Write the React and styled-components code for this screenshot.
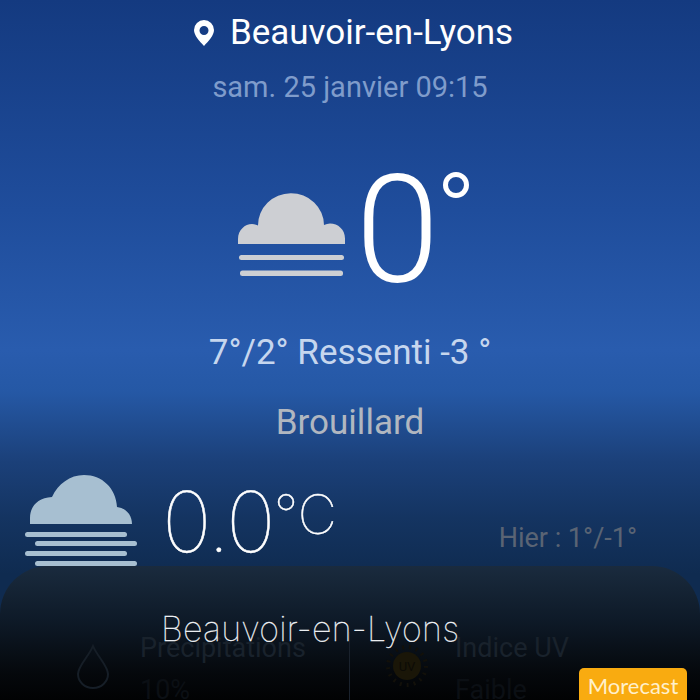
import React from "react"
import styled, { createGlobalStyle } from "styled-components"

const Global = createGlobalStyle`
  html, body {
    margin: 0;
    padding: 0;
    background: #000;
  }
`

const Screen = styled.div`
  position: relative;
  width: 700px;
  height: 700px;
  overflow: hidden;
  display: flex;
  flex-direction: column;
  align-items: center;
  font-family: Roboto, "Liberation Sans", sans-serif;
  background: linear-gradient(
    180deg,
    #143a80 0%,
    #1f4d9c 30%,
    #295cae 50%,
    #2558a5 56%,
    #1b4079 66%,
    #143461 74%,
    #0f2b50 82%,
    #0f2b50 100%
  );
`

const City = styled.div`
  display: flex;
  align-items: center;
  gap: 16px;
  height: 32px;
  margin-top: 17px;
  margin-left: 7px;
  color: #fff;
  font-size: 35px;
  line-height: 32px;
`

const DateLine = styled.div`
  margin-top: 22px;
  color: #7f9ccb;
  font-size: 29px;
  line-height: 32px;
`

const Now = styled.div`
  display: flex;
  align-items: flex-start;
  height: 130px;
  margin-top: 64px;
  margin-left: 7px;
  color: #fff;

  svg {
    margin-top: 21px;
  }
`

const BigTemp = styled.div`
  font-size: 151px;
  font-weight: 300;
  line-height: 130px;
  margin-left: 10px;
  margin-top: -1px;
`

const Degree = styled.span`
  display: block;
  width: 26px;
  height: 26px;
  box-sizing: border-box;
  margin-left: 4px;
  margin-top: 5px;
  border: 5px solid #fff;
  border-radius: 50%;
`

const Feels = styled.div`
  margin-top: 37px;
  color: #c6d6ee;
  font-size: 35px;
  line-height: 38px;
`

const Condition = styled.div`
  margin-top: 32px;
  color: #b1b7c0;
  font-size: 35px;
  line-height: 38px;
`

const Bridge = styled.div`
  align-self: stretch;
  display: flex;
  align-items: flex-start;
  height: 91px;
  margin-top: 33px;
  padding-left: 25px;
`

const Reading = styled.div`
  margin-left: 25px;
  margin-top: -2px;
  color: #fff;
  font-family: Inter, Lato, sans-serif;
  font-weight: 100;
  font-size: 84px;
  line-height: 84px;
  letter-spacing: -2px;
  -webkit-text-stroke: 0.5px #fff;
`

const Unit = styled.span`
  font-size: 54px;
  vertical-align: 18px;
  letter-spacing: 0;
`

const Yesterday = styled.div`
  margin-left: auto;
  margin-right: 63px;
  margin-top: 48px;
  color: #5a6474;
  font-size: 27px;
  line-height: 30px;
`

const Sheet = styled.div`
  align-self: stretch;
  flex: 1;
  min-height: 0;
  overflow: hidden;
  display: grid;
  grid-template-columns: 1fr 1fr;
  border-radius: 48px 48px 0 0;
  background: linear-gradient(180deg, #1a2b3e 0%, #0e1a28 40%, #05080c 80%, #010203 100%);
`

const Stat = styled.div`
  display: flex;
  align-items: flex-start;
  gap: ${({ $gap }) => $gap}px;
  height: 100px;
  margin-top: 66px;
  padding-left: ${({ $inset }) => $inset}px;
  border-right: ${({ $divided }) => ($divided ? "1px solid #1a222d" : "none")};
  font-size: 27px;
  line-height: 32px;

  svg {
    margin-top: 12px;
    flex: none;
  }
`

const StatLines = styled.div`
  display: flex;
  flex-direction: column;
  gap: 10px;
`

const StatLabel = styled.span`
  color: #19222c;
`

const StatValue = styled.span`
  color: #0b0f14;
`

const SheetTitle = styled.div`
  position: absolute;
  left: 161px;
  top: 609px;
  color: #f1f4f7;
  font-family: Inter, Lato, sans-serif;
  font-weight: 100;
  font-size: 34px;
  line-height: 40px;
  letter-spacing: 0.25px;
  white-space: nowrap;
  -webkit-text-stroke: 0.3px #f1f4f7;
`

const Badge = styled.div`
  position: absolute;
  right: 13px;
  bottom: -2px;
  width: 108px;
  height: 34px;
  display: flex;
  align-items: center;
  justify-content: center;
  border-radius: 5px 5px 0 0;
  background: #f9ab10;
  color: #fff0cc;
  font-family: Lato, sans-serif;
  font-size: 22px;
`

const Pin = () => (
  <svg width="20" height="26" viewBox="0 0 20 26">
    <path
      fill="#fff"
      fillRule="evenodd"
      d="M10 0a10 10 0 0 1 10 10c0 5.500-5.500 11-10 16c-4.500-5-10-10.500-10-16a10 10 0 0 1 10-10zM10 6a4.500 4.500 0 1 0 0 9a4.500 4.500 0 0 0 0-9z"
    />
  </svg>
)

const FogSmall = () => (
  <svg width="108" height="90" viewBox="0 0 108 90">
    <g fill="#cdcfd3">
      <path d="M0 56v-5c0-9 7-15 14-15c2 0 4 .5 6 1.500A33 32 0 0 1 86 37c2-1 4-1.500 6-1.500c8 0 15 6 15 15v5.500z" />
      <rect x="1" y="67" width="105" height="5" rx="2.500" />
      <rect x="2" y="82.500" width="103" height="5.500" rx="2.500" />
    </g>
  </svg>
)

const FogLarge = () => (
  <svg width="112" height="91" viewBox="0 0 112 91">
    <g fill="#a7bfd1">
      <path d="M5 49v-6C5 32 12 23 27 22C33 9 45 0 59 0C77 0 91 13 92 32C101 33 107 40 107 49z" />
      <rect x="0" y="57" width="102" height="5" rx="2.500" />
      <rect x="10" y="66" width="102" height="5" rx="2.500" />
      <rect x="0" y="76" width="102" height="5" rx="2.500" />
      <rect x="10" y="86" width="102" height="5" rx="2.500" />
    </g>
  </svg>
)

const Drop = () => (
  <svg width="34" height="46" viewBox="0 0 34 46">
    <path
      fill="none"
      stroke="#161e27"
      strokeWidth="2"
      d="M17 2c-4 10-15 20-15 28a15 14 0 0 0 30 0c0-8-11-18-15-28z"
    />
  </svg>
)

const UvSun = () => (
  <svg width="44" height="44" viewBox="0 0 44 44">
    <circle cx="22" cy="22" r="14" fill="#1a1608" />
    <circle cx="22" cy="22" r="19" fill="none" stroke="#12100a" strokeWidth="4" strokeDasharray="2 5" />
    <text x="22" y="27" fontSize="13" textAnchor="middle" fill="#0c0b06">
      UV
    </text>
  </svg>
)

export default function App() {
  return (
    <>
      <Global />
      <Screen>
        <City>
          <Pin />
          Beauvoir-en-Lyons
        </City>
        <DateLine>sam. 25 janvier 09:15</DateLine>
        <Now>
          <FogSmall />
          <BigTemp>0</BigTemp>
          <Degree />
        </Now>
        <Feels>7°/2° Ressenti -3 °</Feels>
        <Condition>Brouillard</Condition>
        <Bridge>
          <FogLarge />
          <Reading>
            0.0<Unit>°C</Unit>
          </Reading>
          <Yesterday>Hier : 1°/-1°</Yesterday>
        </Bridge>
        <Sheet>
          <Stat $inset={76} $gap={30} $divided>
            <Drop />
            <StatLines>
              <StatLabel>Precipitations</StatLabel>
              <StatValue>10%</StatValue>
            </StatLines>
          </Stat>
          <Stat $inset={35} $gap={26}>
            <UvSun />
            <StatLines>
              <StatLabel>Indice UV</StatLabel>
              <StatValue>Faible</StatValue>
            </StatLines>
          </Stat>
        </Sheet>
        <SheetTitle>Beauvoir-en-Lyons</SheetTitle>
        <Badge>Morecast</Badge>
      </Screen>
    </>
  )
}
